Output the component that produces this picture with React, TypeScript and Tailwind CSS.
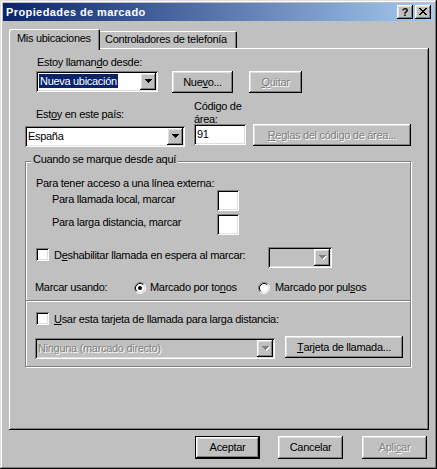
import React from "react";

const raised =
  "shadow-[inset_-1px_-1px_0_#000,inset_1px_1px_0_#fff,inset_-2px_-2px_0_#808080,inset_2px_2px_0_#dfdfdf]";
const sunken =
  "shadow-[inset_1px_1px_0_#808080,inset_-1px_-1px_0_#fff,inset_2px_2px_0_#000,inset_-2px_-2px_0_#dfdfdf]";
const defEdge =
  "shadow-[inset_0_0_0_1px_#000,inset_-2px_-2px_0_#000,inset_2px_2px_0_#fff,inset_-3px_-3px_0_#808080,inset_3px_3px_0_#dfdfdf]";
const dis = "text-[#808080] [text-shadow:1px_1px_0_#fff]";

function Arrow({ disabled }: { disabled?: boolean }) {
  const d = "M0 0H7V1H6V2H5V3H4V4H3V3H2V2H1V1H0Z";
  return (
    <svg width="8" height="5" viewBox="0 0 8 5" shapeRendering="crispEdges">
      {disabled && <path d={d} transform="translate(1 1)" fill="#fff" />}
      <path d={d} fill={disabled ? "#808080" : "#000"} />
    </svg>
  );
}

function DropBtn({ disabled }: { disabled?: boolean }) {
  return (
    <div className={`w-[16px] h-[17px] shrink-0 bg-[#c0c0c0] flex items-center justify-center pl-[1px] ${raised}`}>
      <Arrow disabled={disabled} />
    </div>
  );
}

function Combo({
  className = "",
  children,
  disabled,
}: {
  className?: string;
  children?: React.ReactNode;
  disabled?: boolean;
}) {
  return (
    <div className={`h-[21px] p-[2px] flex shrink-0 ${disabled ? "bg-[#c0c0c0]" : "bg-white"} ${sunken} ${className}`}>
      <div className={`flex-1 min-w-0 pl-[1px] leading-[17px] whitespace-nowrap overflow-hidden ${disabled ? dis : ""}`}>
        {children}
      </div>
      <DropBtn disabled={disabled} />
    </div>
  );
}

function Btn({
  className = "",
  children,
  disabled,
  isDefault,
}: {
  className?: string;
  children?: React.ReactNode;
  disabled?: boolean;
  isDefault?: boolean;
}) {
  return (
    <div
      className={`flex items-center justify-center shrink-0 bg-[#c0c0c0] whitespace-nowrap ${isDefault ? defEdge : raised} ${
        disabled ? dis : ""
      } ${className}`}
    >
      {children}
    </div>
  );
}

function Check({ className = "" }: { className?: string }) {
  return <div className={`w-[13px] h-[13px] bg-white shrink-0 ${sunken} ${className}`} />;
}

function Radio({ checked, className = "" }: { checked?: boolean; className?: string }) {
  return (
    <svg width="12" height="12" viewBox="0 0 12 12" className={`shrink-0 ${className}`}>
      <circle cx="6" cy="6" r="4.5" fill="#fff" />
      <path d="M2.11 9.89A5.5 5.5 0 0 1 9.89 2.11" stroke="#808080" fill="none" />
      <path d="M9.89 2.11A5.5 5.5 0 0 1 2.11 9.89" stroke="#fff" fill="none" />
      <path d="M2.82 9.18A4.5 4.5 0 0 1 9.18 2.82" stroke="#000" fill="none" />
      <path d="M9.18 2.82A4.5 4.5 0 0 1 2.82 9.18" stroke="#dfdfdf" fill="none" />
      {checked && <circle cx="6" cy="6" r="2" fill="#000" />}
    </svg>
  );
}

function Field({ className = "", children }: { className?: string; children?: React.ReactNode }) {
  return (
    <div className={`h-[21px] bg-white shrink-0 p-[2px] pl-[3px] leading-[17px] ${sunken} ${className}`}>{children}</div>
  );
}

export default function App() {
  return (
    <div className="w-[437px] h-[469px] bg-[#c0c0c0] p-[3px] font-['Liberation_Sans',Arial,sans-serif] text-[11px] leading-[13px] tracking-[-0.3px] text-black select-none shadow-[inset_-1px_-1px_0_#000,inset_1px_1px_0_#dfdfdf,inset_-2px_-2px_0_#808080,inset_2px_2px_0_#fff]">
      {/* Title bar */}
      <div className="h-[18px] flex items-center pl-[3px] pr-[3px] bg-[linear-gradient(to_right,#0a246a,#a6caf0)]">
        <span className="flex-1 text-white font-bold leading-[18px] tracking-[0.4px]">Propiedades de marcado</span>
        <div className={`w-[16px] h-[14px] bg-[#c0c0c0] flex items-center justify-center font-bold text-[11px] leading-[14px] tracking-normal ${raised}`}>
          ?
        </div>
        <div className={`ml-[2px] w-[16px] h-[14px] bg-[#c0c0c0] flex items-center justify-center ${raised}`}>
          <svg width="8" height="7" viewBox="0 0 8 7" shapeRendering="crispEdges" className="-mt-[1px]">
            <path
              d="M0 0H2V1H3V2H5V1H6V0H8V1H7V2H6V3H5V4H6V5H7V6H8V7H6V6H5V5H3V6H2V7H0V6H1V5H2V4H3V3H2V2H1V1H0Z"
              fill="#000"
            />
          </svg>
        </div>
      </div>

      <div className="pl-[6px]">
        {/* Tabs */}
        <div className="mt-[8px] flex items-end h-[19px]">
          <div className="relative z-10 w-[91px] h-[21px] -mb-[2px] bg-[#c0c0c0] pl-[8px] pt-[3px] rounded-t-[2px] shadow-[inset_1px_1px_0_#fff,inset_-1px_0_0_#000,inset_-2px_0_0_#808080]">
            Mis ubicaciones
          </div>
          <div className="-ml-[2px] w-[139px] h-[17px] bg-[#c0c0c0] pl-[7px] pt-[2px] rounded-t-[2px] shadow-[inset_1px_1px_0_#fff,inset_-1px_0_0_#000,inset_-2px_0_0_#808080]">
            Controladores de telefonía
          </div>
        </div>

        {/* Panel */}
        <div className="w-[420px] h-[382px] flex flex-col shadow-[inset_-1px_-1px_0_#000,inset_1px_1px_0_#fff,inset_-2px_-2px_0_#808080]">
          <div className="mt-[8px] ml-[28px] h-[13px]">
            Estoy llaman<u>d</u>o desde:
          </div>
          <div className="mt-[2px] ml-[27px] flex items-start">
            <Combo className="w-[122px]">
              <span className="bg-[#0a246a] text-white px-[1px] py-[1px]">Nueva ubicación</span>
            </Combo>
            <Btn className="ml-[14px] w-[61px] h-[22px]">
              Nue<u>v</u>o...
            </Btn>
            <Btn disabled className="ml-[16px] w-[53px] h-[22px]">
              <u>Q</u>uitar
            </Btn>
          </div>

          <div className="mt-[7px] flex items-start h-[26px]">
            <div className="ml-[27px] mt-[8px] w-[158px]">
              Est<u>o</u>y en este país:
            </div>
            <div>
              <div>Código de</div>
              <div>
                áre<u>a</u>:
              </div>
            </div>
          </div>

          <div className="-mt-[2px] flex items-start">
            <Combo className="ml-[16px] mt-[2px] w-[160px]">España</Combo>
            <Field className="ml-[9px] w-[52px]">91</Field>
            <Btn disabled className="ml-[7px] w-[158px] h-[22px]">
              <u>R</u>eglas del código de área...
            </Btn>
          </div>

          {/* Group */}
          <div className="relative mt-[14px] ml-[16px] w-[386px] h-[206px] border border-[#808080] shadow-[inset_1px_1px_0_#fff,1px_1px_0_#fff] flex flex-col">
            <div className="absolute left-[5px] -top-[9px] px-[2px] bg-[#c0c0c0]">Cuando se marque desde aquí</div>

            <div className="mt-[15px] ml-[10px]">Para tener acceso a una línea externa:</div>

            <div className="flex items-start">
              <div className="ml-[26px] mt-[3px] w-[165px]">Para llamada local, marcar</div>
              <Field className="w-[22px]" />
            </div>
            <div className="mt-[3px] flex items-start">
              <div className="ml-[26px] mt-[2px] w-[165px]">Para larga distancia, marcar</div>
              <Field className="w-[22px]" />
            </div>

            <div className="mt-[12px] flex items-start">
              <Check className="ml-[10px] mt-[1px]" />
              <div className="ml-[5px] mt-[2px] w-[214px]">
                D<u>e</u>shabilitar llamada en espera al marcar:
              </div>
              <Combo disabled className="w-[64px]" />
            </div>

            <div className="mt-[13px] flex items-start">
              <div className="ml-[9px] w-[99px]">Marcar usando:</div>
              <Radio checked className="mt-[1px]" />
              <div className="ml-[4px] w-[108px]">
                Marcado por to<u>n</u>os
              </div>
              <Radio className="mt-[1px]" />
              <div className="ml-[5px]">
                Marcado por pul<u>s</u>os
              </div>
            </div>

            <div className="mt-[6px] h-[2px] border-t border-[#808080] bg-white" />

            <div className="mt-[10px] flex items-start">
              <Check className="ml-[10px]" />
              <div className="ml-[5px] mt-[1px]">
                <u>U</u>sar esta tarjeta de llamada para larga distancia:
              </div>
            </div>

            <div className="mt-[10px] flex items-start">
              <Combo disabled className="ml-[9px] mt-[2px] w-[240px]">
                Ninguna (marcado directo)
              </Combo>
              <Btn className="ml-[10px] w-[118px] h-[22px]">
                <u>T</u>arjeta de llamada...
              </Btn>
            </div>
          </div>
        </div>

        {/* Bottom buttons */}
        <div className="mt-[6px] flex">
          <Btn isDefault className="ml-[186px] w-[65px] h-[23px]">
            Aceptar
          </Btn>
          <Btn className="ml-[18px] w-[65px] h-[23px]">Cancelar</Btn>
          <Btn disabled className="ml-[19px] w-[65px] h-[23px]">
            Apli<u>c</u>ar
          </Btn>
        </div>
      </div>
    </div>
  );
}
